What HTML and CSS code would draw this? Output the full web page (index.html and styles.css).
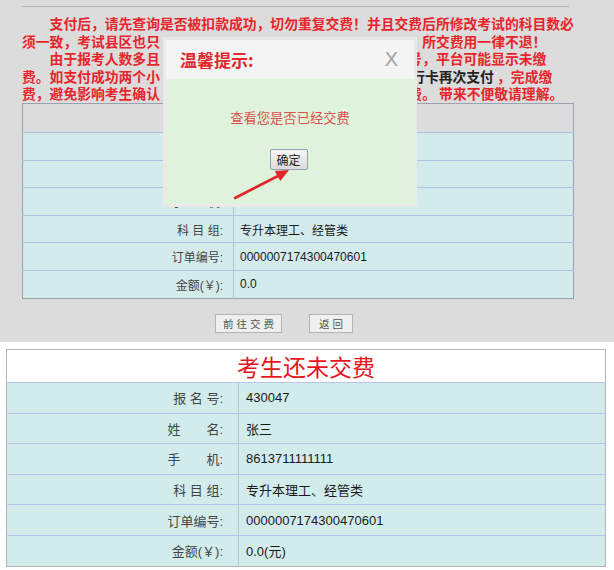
FILE: index.html
```html
<!DOCTYPE html>
<html lang="zh-CN">
<head>
<meta charset="utf-8">
<title>交费查询</title>
<link rel="stylesheet" href="styles.css">
</head>
<body>
<div class="shot-top">
  <div class="rule"></div>
  <div class="notice">
    <p class="para">支付后，请先查询是否被扣款成功，切勿重复交费！并且交费后所修改考试的科目数必<br>须一致，考试县区也只<span class="gap g19"></span>所交费用一律不退！</p>
    <p class="para">由于报考人数多且<span class="gap g18"></span>号，平台可能显示未缴<br>费。如支付成功两个小<span class="gap g18s"></span><span class="dark">行卡再次支付</span> ，完成缴<br>费，避免影响考生确认<span class="gap g18"></span>费。 带来不便敬请理解。</p>
  </div>
  <table class="info info-top">
    <tr class="head"><td colspan="2"></td></tr>
    <tr><td class="lbl">报 名 号:</td><td class="val">430047</td></tr>
    <tr><td class="lbl">姓　　名:</td><td class="val">张三</td></tr>
    <tr><td class="lbl">手　　机:</td><td class="val">8613711111111</td></tr>
    <tr><td class="lbl">科 目 组:</td><td class="val">专升本理工、经管类</td></tr>
    <tr><td class="lbl">订单编号:</td><td class="val">0000007174300470601</td></tr>
    <tr><td class="lbl">金额(￥):</td><td class="val">0.0</td></tr>
  </table>
  <div class="actions">
    <button class="btn btn-pay" type="button">前往交费</button>
    <button class="btn btn-back" type="button">返回</button>
  </div>

  <div class="modal">
    <div class="modal-head">
      <span class="modal-title">温馨提示:</span>
      <span class="modal-close">X</span>
    </div>
    <div class="modal-body">
      <p class="modal-msg">查看您是否已经交费</p>
      <button class="ok" type="button">确定</button>
    </div>
  </div>
  <svg class="arrow" width="66" height="40" viewBox="0 0 66 40">
    <line x1="5" y1="33" x2="48" y2="11" stroke="#e0262a" stroke-width="2.6" stroke-linecap="round"/>
    <polygon points="59,5 50.3,16 44.7,6" fill="#e0262a"/>
  </svg>
</div>

<div class="shot-bottom">
  <table class="info info-bottom">
    <tr class="head"><td colspan="2" class="title">考生还未交费</td></tr>
    <tr><td class="lbl">报 名 号:</td><td class="val">430047</td></tr>
    <tr><td class="lbl">姓　　名:</td><td class="val">张三</td></tr>
    <tr><td class="lbl">手　　机:</td><td class="val">8613711111111</td></tr>
    <tr><td class="lbl">科 目 组:</td><td class="val">专升本理工、经管类</td></tr>
    <tr><td class="lbl">订单编号:</td><td class="val">0000007174300470601</td></tr>
    <tr><td class="lbl">金额(￥):</td><td class="val">0.0(元)</td></tr>
  </table>
</div>
</body>
</html>
```

FILE: styles.css
```css
* { box-sizing: border-box; }
html, body { margin: 0; padding: 0; background: #fff; }
body {
  width: 614px;
  height: 570px;
  overflow: hidden;
  font-family: "Liberation Sans", "Noto Sans CJK SC", sans-serif;
}

.shot-top {
  position: relative;
  background: #dcdcdc;
  height: 342px;
  padding-top: 6px;
}
.rule {
  height: 1px;
  margin: 0 45px 0 22px;
  background: #b3b3b3;
}
.notice {
  margin: 8px 0 0 22px;
  font-family: "Noto Sans CJK SC", sans-serif;
  font-weight: 700;
  font-size: 13.8px;
  line-height: 17.6px;
  color: #e8242b;
  white-space: nowrap;
}
.para { margin: 0; text-indent: 2em; }
.dark { color: #222; }
.gap { display: inline-block; height: 1px; }
.g18 { width: 18em; }
.g18s { width: 18.2em; }
.g19 { width: 19em; }

.info {
  border-collapse: collapse;
  font-family: "Liberation Sans", "Noto Sans CJK SC", sans-serif;
}
.info td { padding: 0; }
.info .lbl { text-align: right; color: #444; }
.info .val { color: #1a1a1a; }

.info-top {
  margin-left: 22px;
  width: 552px;
  font-size: 12px;
  border: 1px solid #9aa3ad;
}
.info-top tr { background: #d3ebeb; }
.info-top td { border-top: 1px solid #aec3df; height: 27.6px; }
.info-top .head { background: #dcdcdc; }
.info-top .head td { height: 29px; border-top: 0; }
.info-top .lbl { width: 211px; padding-right: 10px; border-right: 1px solid #aec3df; }
.info-top .val { padding-left: 6px; }

.actions {
  display: flex;
  gap: 27px;
  padding: 15px 0 0 215px;
}
.btn {
  height: 19px;
  padding: 0 0 0 3px;
  margin: 0;
  border: 1px solid #b4b4b4;
  background: #efefef;
  color: #555;
  font-family: "Noto Sans CJK SC", sans-serif;
  font-size: 10.5px;
  letter-spacing: 3px;
  line-height: 17px;
  white-space: nowrap;
}
.btn-pay { width: 67px; }
.btn-back { width: 44px; }

.modal {
  position: absolute;
  left: 163px;
  top: 37px;
  width: 254px;
  height: 170px;
  border: 3px solid #e9e9e9;
  background: #dff2dc;
  display: flex;
  flex-direction: column;
}
.modal-head {
  height: 39px;
  background: #f4f4f4;
  display: flex;
  align-items: center;
  justify-content: space-between;
  padding: 0 16px 0 14px;
}
.modal-title {
  font-family: "Noto Sans CJK SC", sans-serif;
  font-weight: 700;
  font-size: 17px;
  color: #e0282d;
}
.modal-close {
  font-family: "Liberation Sans", sans-serif;
  font-size: 20px;
  color: #a3a3a3;
}
.modal-body {
  flex: 1;
  display: flex;
  flex-direction: column;
  align-items: center;
}
.modal-msg {
  margin: 30px 0 0;
  font-family: "Noto Sans CJK SC", sans-serif;
  font-size: 13.3px;
  line-height: 18px;
  color: #d9524a;
}
.ok {
  margin: 22px 0 0 -3px;
  width: 38px;
  height: 21px;
  padding: 0;
  border: 1px solid #8fa2b8;
  border-radius: 2px;
  background: linear-gradient(#f6f6f6, #dcdcdc);
  font-family: "Noto Sans CJK SC", sans-serif;
  font-size: 12px;
  color: #222;
}
.arrow {
  position: absolute;
  left: 230px;
  top: 165px;
}

.shot-bottom {
  padding: 7px 8px 0 6px;
}
.info-bottom {
  width: 600px;
  font-size: 13px;
  border: 1px solid #b5b5b5;
}
.info-bottom tr { background: #d2ecec; }
.info-bottom td { border-top: 1px solid #b7c3ea; height: 30.6px; }
.info-bottom .head { background: #fff; }
.info-bottom .head td { border-top: 0; height: 33px; }
.info-bottom .title {
  text-align: center;
  font-family: "Noto Sans CJK SC", sans-serif;
  font-size: 23px;
  line-height: 30px;
  color: #e8141c;
}
.info-bottom .lbl { width: 232px; padding-right: 15px; border-right: 1px solid #b7c3ea; }
.info-bottom .val { padding-left: 7px; }
```
